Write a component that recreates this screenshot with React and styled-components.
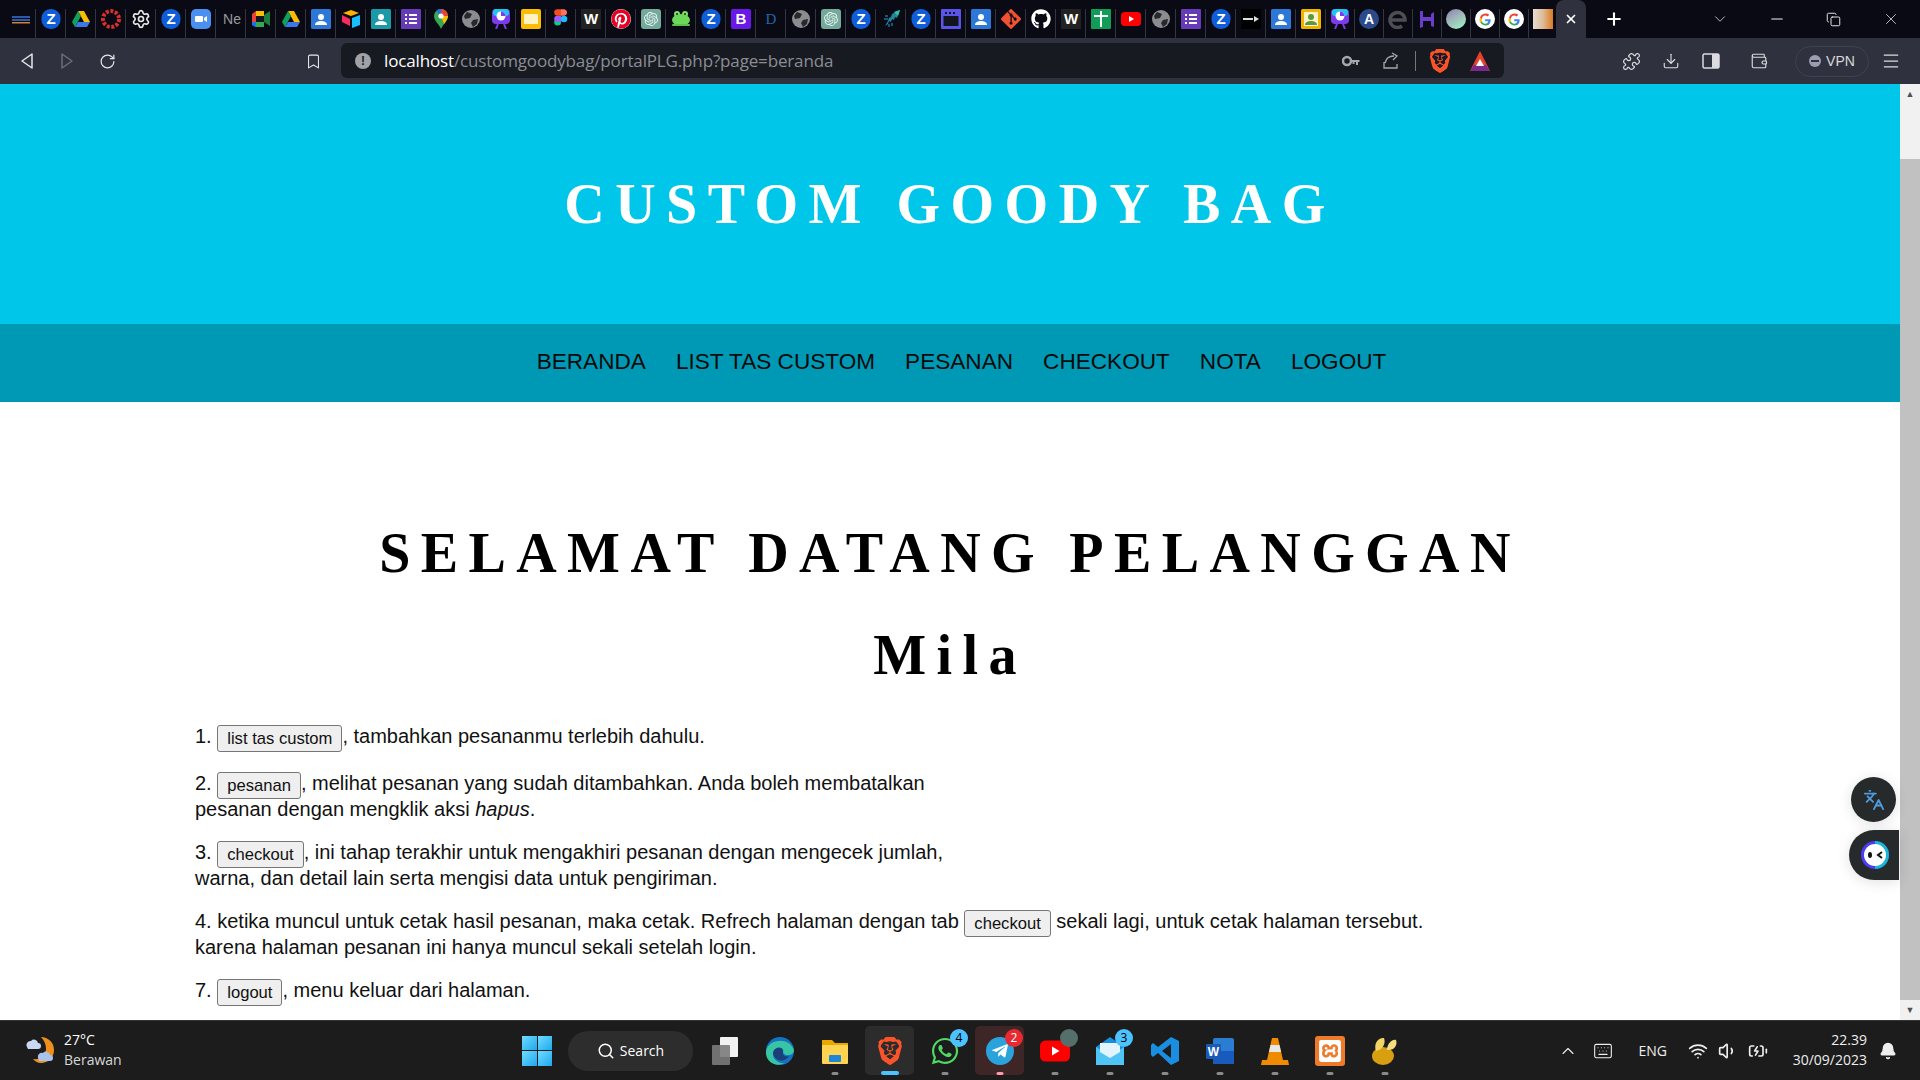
import styled, { createGlobalStyle } from "styled-components";
import {
  Bookmark, ChevronDown, ChevronUp, Copy, Download, Menu, Minus, Plus, Puzzle, RotateCw, Search,
  Wallet, X, Wifi, Volume1, BatteryCharging, Keyboard, Bell, Languages, Settings,
} from "lucide-react";
import { FaGithub, FaPinterest, FaWhatsapp, FaTelegramPlane } from "react-icons/fa";
import { SiBrave, SiOpenai, SiXampp, SiGit } from "react-icons/si";

const GlobalStyle = createGlobalStyle`
  html, body { margin: 0; padding: 0; height: 100%; overflow: hidden; }
  body { font-family: "Liberation Sans", Arial, sans-serif; background: #fff; }
`;

const Screen = styled.div`
  width: 1920px;
  height: 1080px;
  display: flex;
  flex-direction: column;
  position: relative;
  overflow: hidden;
`;

/* ---------- browser chrome ---------- */
const TabStrip = styled.div`
  height: 38px;
  flex: none;
  background: #0a0a14;
  display: flex;
  align-items: stretch;
  padding-left: 6px;
  color: #fff;
`;
const Tab = styled.div`
  width: ${(p) => p.$w || 30}px;
  flex: none;
  display: flex;
  align-items: center;
  justify-content: center;
  border-right: 1px solid #33353f;
  margin: 9px 0 0;
  padding-bottom: 9px;
  box-sizing: border-box;
  svg { display: block; }
`;
const ActiveTab = styled.div`
  width: 30px;
  flex: none;
  margin-left: -2px;
  background: #2f323e;
  border-radius: 8px 8px 0 0;
  display: flex;
  align-items: center;
  justify-content: center;
  color: #fff;
`;
const NewTab = styled.div`
  margin-left: 13px;
  width: 30px;
  display: flex;
  align-items: center;
  justify-content: center;
`;
const WindowControls = styled.div`
  margin-left: auto;
  display: flex;
  align-items: center;
  color: #f0f0f2;
`;
const WindowButton = styled.div`
  width: ${(p) => p.$w || 57}px;
  display: flex;
  justify-content: center;
`;
const Toolbar = styled.div`
  height: 46px;
  flex: none;
  background: #2f323e;
  display: flex;
  align-items: center;
  color: #e6e6ea;
  box-sizing: border-box;
`;
const NavIcon = styled.div`
  width: 40px;
  display: flex;
  justify-content: center;
  color: ${(p) => (p.$dim ? "#6b6e78" : "#e6e6ea")};
`;
const NavIcons = styled.div`
  display: flex;
  padding-left: 7px;
  width: 341px;
  flex: none;
  box-sizing: border-box;
  align-items: center;
`;
const BookmarkSlot = styled.div`
  margin-left: auto;
  width: 30px;
  margin-right: 13px;
  display: flex;
  justify-content: center;
`;
const AddressBar = styled.div`
  width: 1163px;
  height: 35px;
  margin-top: -1px;
  background: #181a21;
  border-radius: 6px;
  display: flex;
  align-items: center;
  padding: 0 4px 0 14px;
  box-sizing: border-box;
`;
const InfoDot = styled.div`
  width: 16px;
  height: 16px;
  border-radius: 50%;
  background: #a0a2a8;
  color: #181a21;
  font-size: 12px;
  font-weight: 700;
  text-align: center;
  line-height: 16px;
`;
const Url = styled.div`
  margin-left: 13px;
  font-family: "Open Sans", sans-serif;
  font-size: 17px;
  letter-spacing: -0.15px;
  color: #8b8d94;
  flex: 1;
  white-space: nowrap;
  b { font-weight: 400; color: #fff; }
`;
const BarIcon = styled.div`
  display: flex;
  align-items: center;
  justify-content: center;
  width: 40px;
  color: #a6a8ae;
`;
const BarDivider = styled.div`
  width: 1px;
  height: 20px;
  background: #777;
  margin: 0 4px;
`;
const ToolGroup = styled.div`
  flex: 1;
  display: flex;
  align-items: center;
  padding-left: 107px;
`;
const ToolIcon = styled.div`
  width: 40px;
  margin-left: ${(p) => p.$ml || 0}px;
  margin-right: ${(p) => p.$mr || 0}px;
  display: flex;
  justify-content: center;
  color: #dcdce0;
`;
const VpnPill = styled.div`
  width: 74px;
  height: 31px;
  border: 1px solid #3e414e;
  border-radius: 16px;
  box-sizing: border-box;
  margin-left: 8px;
  display: flex;
  align-items: center;
  justify-content: center;
  gap: 5px;
  font-size: 14px;
  color: #d8d8dc;
`;
const VpnDot = styled.span`
  width: 12px;
  height: 12px;
  border-radius: 50%;
  background: #9a9eb0;
  display: flex;
  align-items: center;
  justify-content: center;
  &::after { content: ""; width: 8px; height: 2px; background: #2f323e; }
`;

/* ---------- page ---------- */
const Viewport = styled.div`
  flex: 1;
  min-height: 0;
  display: flex;
`;
const Page = styled.main`
  flex: 1;
  min-width: 0;
  overflow: hidden;
  background: #fff;
`;
const Hero = styled.header`
  height: 240px;
  background: #00c6e9;
  display: flex;
  align-items: center;
  justify-content: center;
`;
const SiteTitle = styled.div`
  font-family: "Liberation Serif", "Times New Roman", serif;
  font-weight: 700;
  font-size: 56px;
  letter-spacing: 10.5px;
  color: #fff;
  white-space: nowrap;
`;
const NavBar = styled.nav`
  height: 78px;
  background: #0099b5;
  display: flex;
  align-items: center;
  justify-content: center;
  gap: 30px;
  padding: 0 0 2px 23px;
  box-sizing: border-box;
`;
const NavLink = styled.a`
  font-size: 22.6px;
  color: #0a0a0a;
`;
const Content = styled.section`
  padding: 119px 195px 0;
`;
const Heading = styled.h1`
  margin: 0;
  text-align: center;
  font-family: "Liberation Serif", "Times New Roman", serif;
  font-weight: 700;
  font-size: 56px;
  line-height: 64px;
  letter-spacing: 10.4px;
  color: #000;
  white-space: nowrap;
  & + & { margin-top: 38px; }
`;
const Steps = styled.div`
  margin-top: 36px;
  font-size: 20px;
  line-height: 26px;
  color: #111;
`;
const Step = styled.p`
  margin: 0 0 17px;
  &:first-child { margin-bottom: 21px; }
`;
const InlineButton = styled.button`
  font-family: "Liberation Sans", Arial, sans-serif;
  font-size: 16.6px;
  height: 27px;
  padding: 0 9px;
  margin: 0 0 -3px;
  background: #efefef;
  border: 1px solid #767676;
  border-radius: 3px;
  color: #111;
  vertical-align: -1px;
  line-height: 25px;
`;
const Scrollbar = styled.div`
  width: 20px;
  flex: none;
  background: #f1f1f1;
  display: flex;
  flex-direction: column;
  align-items: center;
`;
const ScrollArrow = styled.div`
  height: 20px;
  color: #505050;
  font-size: 9px;
  line-height: 20px;
`;
const ScrollTrack = styled.div`
  flex: 1;
  width: 100%;
  padding-top: 55px;
  box-sizing: border-box;
  display: flex;
`;
const ScrollThumb = styled.div`
  width: 100%;
  background: #c1c1c1;
`;
const FloatingTranslate = styled.div`
  position: absolute;
  left: 1851px;
  top: 777px;
  width: 45px;
  height: 45px;
  border-radius: 50%;
  background: #262a2b;
  display: flex;
  align-items: center;
  justify-content: center;
  color: #4f9be0;
  box-shadow: 0 2px 14px rgba(0, 0, 0, 0.12);
`;
const FloatingBot = styled.div`
  position: absolute;
  left: 1849px;
  top: 830px;
  width: 50px;
  height: 50px;
  border-radius: 25px 0 0 25px;
  background: #262a2b;
  display: flex;
  align-items: center;
  padding-left: 11px;
  box-sizing: border-box;
  box-shadow: 0 2px 14px rgba(0, 0, 0, 0.12);
`;

/* ---------- taskbar ---------- */
const Taskbar = styled.footer`
  height: 60px;
  flex: none;
  background: #1c1c1c;
  border-top: 1px solid #333;
  box-sizing: border-box;
  display: flex;
  align-items: center;
  color: #fff;
`;
const Weather = styled.div`
  width: 522px;
  flex: none;
  display: flex;
  align-items: center;
  padding: 0 0 2px 24px;
  gap: 8px;
  box-sizing: border-box;
  font-family: "Open Sans", sans-serif;
  font-size: 14px;
  line-height: 20px;
  span { color: #d8d8d8; display: block; }
`;
const StartButton = styled.div`
  width: 30px;
  height: 30px;
  display: grid;
  grid-template-columns: 1fr 1fr;
  gap: 1px;
`;
const StartPane = styled.div`
  background: linear-gradient(135deg, #6fdcff, #1fa8ee);
`;
const SearchPill = styled.div`
  margin-left: 16px;
  margin-right: 4px;
  width: 125px;
  height: 40px;
  border-radius: 20px;
  background: #2d2d2d;
  display: flex;
  align-items: center;
  justify-content: center;
  gap: 5px;
  font-family: "Open Sans", sans-serif;
  font-size: 14px;
`;
const AppSlot = styled.div`
  width: 49px;
  height: 49px;
  margin: 0 3px;
  flex: none;
  position: relative;
  border-radius: 5px;
  background: ${(p) => p.$bg || "transparent"};
  display: flex;
  align-items: center;
  justify-content: center;
`;
const RunDot = styled.span`
  position: absolute;
  bottom: 0px;
  left: 50%;
  transform: translateX(-50%);
  width: ${(p) => (p.$wide ? 18 : 7)}px;
  height: ${(p) => (p.$wide ? 4 : 3)}px;
  border-radius: 2px;
  background: ${(p) => p.$color || "#8a8a8a"};
`;
const Badge = styled.span`
  position: absolute;
  top: 3px;
  right: 1px;
  width: 18px;
  height: 18px;
  border-radius: 50%;
  background: ${(p) => p.$bg};
  color: ${(p) => p.$fg || "#000"};
  font-size: 12px;
  line-height: 18px;
  text-align: center;
  font-family: "Open Sans", sans-serif;
`;
const Tray = styled.div`
  margin-left: auto;
  margin-right: 19px;
  display: flex;
  align-items: center;
  color: #eee;
  font-family: "Open Sans", sans-serif;
`;
const TrayItem = styled.div`
  width: ${(p) => p.$w || 30}px;
  display: flex;
  justify-content: center;
  font-size: 14px;
`;
const Clock = styled.div`
  text-align: right;
  font-size: 14px;
  line-height: 20px;
  margin: 0 8px 2px 20px;
`;
const PinterestBadge = styled(FaPinterest)`
  background: #fff;
  border-radius: 50%;
`;

/* ---------- tab favicons ---------- */
const Txt = ({ x = 10, y = 15, size = 14, fill = "#fff", weight = 700, font = "Liberation Sans", children }) => (
  <text x={x} y={y} fontSize={size} fill={fill} fontWeight={weight} fontFamily={font} textAnchor="middle">{children}</text>
);
const Ico = ({ children, s = 20 }) => <svg width={s} height={s} viewBox="0 0 20 20">{children}</svg>;

const ZaloIcon = () => (
  <Ico><rect x="0.5" y="0" width="19" height="20" rx="9" fill="#0f5ed8" /><Txt size={15}>Z</Txt></Ico>
);
const DriveIcon = ({ s = 20 }) => (
  <Ico s={s}>
    <path d="M7 2h6l6 11h-6z" fill="#fbbc04" />
    <path d="M7 2L1 13l3 5 6-11z" fill="#0fa15c" />
    <path d="M4 18h12l3-5H7z" fill="#3b78e7" />
  </Ico>
);
const MeetIcon = () => (
  <Ico>
    <path d="M1 5l4-3h8v5H5v6H1z" fill="#ea4335" />
    <path d="M1 13h4v5H4l-3-2z" fill="#1a73e8" />
    <path d="M5 2h8v5H5z" fill="#fbbc04" />
    <path d="M5 13h8v5H5z" fill="#34a853" />
    <path d="M13 6l6-4v15l-6-4z" fill="#188038" />
    <rect x="5" y="7" width="8" height="6" fill="#12151e" />
  </Ico>
);
const ContactIcon = ({ bg, fg = "#fff", frame }) => (
  <Ico>
    <rect x="0" y="0" width="20" height="20" rx="1.5" fill={bg} />
    {frame && <rect x="3" y="3" width="14" height="14" fill={frame} />}
    <circle cx="10" cy="8" r="3" fill={fg} />
    <path d="M4 16c0-3 3-4 6-4s6 1 6 4z" fill={fg} />
  </Ico>
);
const AirtableIcon = () => (
  <Ico>
    <path d="M10 1l8 3-8 3-8-3z" fill="#fcb400" />
    <path d="M11 9l8-3v10l-8 3z" fill="#18bfff" />
    <path d="M1 6l8 4v7L1 13z" fill="#f82b60" />
  </Ico>
);
const FormsIcon = () => (
  <Ico>
    <rect width="20" height="20" rx="1" fill="#673ab7" />
    <rect x="4" y="5" width="2" height="2" fill="#fff" /><rect x="8" y="5" width="8" height="2" fill="#fff" />
    <rect x="4" y="9" width="2" height="2" fill="#fff" /><rect x="8" y="9" width="8" height="2" fill="#fff" />
    <rect x="4" y="13" width="2" height="2" fill="#fff" /><rect x="8" y="13" width="8" height="2" fill="#fff" />
  </Ico>
);
const MapsIcon = () => (
  <Ico>
    <path d="M10 0a7 7 0 0 1 7 7c0 5-5 8-7 13-2-5-7-8-7-13a7 7 0 0 1 7-7z" fill="#34a853" />
    <path d="M5 2a7 7 0 0 1 5-2v7z" fill="#1a73e8" />
    <path d="M10 0a7 7 0 0 1 7 7h-7z" fill="#ea4335" />
    <path d="M17 7c0 3-2 5-4 8l-3-8z" fill="#fbbc04" />
    <circle cx="10" cy="7" r="2.6" fill="#fff" />
  </Ico>
);
const GlobeIcon = () => (
  <Ico>
    <circle cx="10" cy="10" r="9" fill="#8a8c90" />
    <path d="M6 3l5 2-2 4-5 1-1-3zM12 11l5-1-1 5-4 3-2-4z" fill="#26282c" />
  </Ico>
);
const PieIcon = () => (
  <Ico>
    <rect x="1" y="0" width="18" height="15" rx="4" fill="#7c3aed" />
    <rect x="2" y="0" width="16" height="7" rx="3" fill="#22c3ee" />
    <circle cx="10" cy="7" r="4.5" fill="#fff" />
    <path d="M10 7V2.500a4.500 4.500 0 0 1 4.500 4.500z" fill="#7c3aed" />
    <path d="M7 15l-2 5M13 15l2 5" stroke="#7c3aed" strokeWidth="2" />
  </Ico>
);
const SlidesIcon = () => (
  <Ico>
    <rect width="20" height="20" rx="2" fill="#fbbc04" />
    <rect x="3" y="5" width="14" height="10" fill="#fff3c4" />
  </Ico>
);
const FigmaIcon = () => (
  <Ico>
    <circle cx="13" cy="10" r="3.300" fill="#1abcfe" />
    <path d="M6.500 16.600a3.300 3.300 0 0 1 0-6.600H10v3.300a3.300 3.300 0 0 1-3.500 3.300z" fill="#0acf83" />
    <path d="M3.200 10a3.300 3.300 0 0 1 3.300-3.300H10V13H6.500A3.300 3.300 0 0 1 3.200 10z" fill="#a259ff" />
    <path d="M3.200 3.500A3.300 3.300 0 0 1 6.500.200H10v6.500H6.500a3.300 3.300 0 0 1-3.300-3.200z" fill="#f24e1e" />
    <path d="M10 .200h3.200a3.300 3.300 0 0 1 0 6.500H10z" fill="#ff7262" />
  </Ico>
);
const WikiIcon = () => (
  <Ico><rect width="20" height="20" fill="#222" /><Txt size={15}>W</Txt></Ico>
);
const GptIcon = () => (
  <svg width="20" height="20" viewBox="0 0 20 20">
    <rect width="20" height="20" rx="3" fill="#74aa9c" />
    <SiOpenai x="3" y="3" size={14} color="#e8f3f0" />
  </svg>
);
const FrogIcon = () => (
  <Ico>
    <circle cx="6" cy="5" r="3" fill="#7fe06a" /><circle cx="14" cy="5" r="3" fill="#7fe06a" />
    <ellipse cx="10" cy="11" rx="9" ry="6" fill="#6cd85a" />
    <circle cx="6" cy="5" r="1" fill="#1a3010" /><circle cx="14" cy="5" r="1" fill="#1a3010" />
    <rect x="1" y="15" width="18" height="2" rx="1" fill="#5cc04a" />
  </Ico>
);
const LetterTile = ({ bg, letter, color = "#fff", font = "Liberation Sans", weight = 700 }) => (
  <Ico><rect width="20" height="20" rx="2" fill={bg} /><Txt size={15} fill={color} font={font} weight={weight}>{letter}</Txt></Ico>
);
const RocketIcon = () => (
  <Ico>
    <path d="M19 1l-3 8-2-1-1 3-2-1-1 3-2-1-1 3-3 2 3-5 1-3 2-1 1-3 2-1 1-1z" fill="#1c8a9a" />
    <path d="M19 1l-6 2 4 4z" fill="#2ec4a8" />
    <path d="M4 7h3M3 10h4M8 15v3M11 14v3" stroke="#1f6f9a" strokeWidth="1.500" />
  </Ico>
);
const WindowIcon = () => (
  <Ico>
    <rect width="20" height="20" rx="1" fill="#5b54e8" />
    <rect x="2.500" y="7" width="15" height="10" fill="#12151e" />
    <rect x="4" y="3" width="2" height="2" fill="#12151e" /><rect x="8" y="3" width="2" height="2" fill="#12151e" /><rect x="12" y="3" width="2" height="2" fill="#12151e" />
  </Ico>
);
const CrossTile = () => (
  <Ico><rect width="20" height="20" rx="1" fill="#0f9d58" /><path d="M10 2v16M3 7h14" stroke="#fff" strokeWidth="2" /></Ico>
);
const YoutubeIcon = ({ s = 20 }) => (
  <Ico s={s}><rect x="0" y="3" width="20" height="14" rx="3.500" fill="#f00" /><path d="M8 7l5 3-5 3z" fill="#fff" /></Ico>
);
const ArrowTile = () => (
  <Ico><rect width="20" height="20" fill="#000" /><path d="M2 10h10" stroke="#ddd" strokeWidth="2" /><path d="M13 7l5 3-5 3z" fill="#ddd" /></Ico>
);
const SphereIcon = () => (
  <svg width="20" height="20" viewBox="0 0 20 20">
    <defs><linearGradient id="sph" x1="0" y1="0" x2="0.6" y2="1"><stop offset="0" stopColor="#8d7ab0" /><stop offset="0.5" stopColor="#9fb4b8" /><stop offset="1" stopColor="#9de8c0" /></linearGradient></defs>
    <ellipse cx="10" cy="10" rx="10" ry="10" fill="url(#sph)" />
  </svg>
);
const GoogleIcon = () => (
  <Ico>
    <circle cx="10" cy="10" r="10" fill="#fff" />
    <path d="M15.500 10.200h-5.300v2.100h3a3.300 3.300 0 0 1-1.300 2l1.800 1.400a5.700 5.700 0 0 0 1.800-5.500z" fill="#4285f4" />
    <path d="M10.200 16.500a5.900 5.900 0 0 0 3.800-1l-1.800-1.400a3.500 3.500 0 0 1-5.300-1.800H5a6.200 6.200 0 0 0 5.200 4.200z" fill="#34a853" />
    <path d="M6.900 12.300a3.600 3.600 0 0 1 0-2.400l-1.900-1.500a6.300 6.300 0 0 0 0 5.400z" fill="#fbbc04" />
    <path d="M10.200 6.500c1 0 1.800.3 2.400.9l1.700-1.600a5.900 5.900 0 0 0-9.300 2.600l1.900 1.500a3.500 3.500 0 0 1 3.300-3.400z" fill="#ea4335" />
  </Ico>
);
const SwatchIcon = () => (
  <svg width="20" height="20" viewBox="0 0 20 20">
    <defs><linearGradient id="swt"><stop offset="0" stopColor="#e6dcd2" /><stop offset="0.5" stopColor="#ddbb98" /><stop offset="1" stopColor="#dc7a20" /></linearGradient></defs>
    <rect width="20" height="20" fill="url(#swt)" />
  </svg>
);
// the "e" mark of the tab next to the Hostinger one
const RingEIcon = () => (
  <Ico><path d="M3 11h14a7.500 7.500 0 1 0-3 6" fill="none" stroke="#4c4e54" strokeWidth="3.500" /></Ico>
);

const favicons = [
  <Ico><rect x="1" y="7" width="18" height="2" fill="#2a5aa8" /><rect x="1" y="10" width="18" height="2" fill="#2a5aa8" /><rect x="1" y="13" width="18" height="1.500" fill="#d08030" /></Ico>,
  <ZaloIcon />, <DriveIcon />,
  <Ico><circle cx="10" cy="10" r="8" fill="none" stroke="#d8302a" strokeWidth="4" strokeDasharray="3 1.600" /></Ico>,
  <Settings size={20} color="#e8e8e8" />,
  <ZaloIcon />,
  <Ico><rect width="20" height="20" rx="5" fill="#4a90f0" /><rect x="4" y="7" width="8" height="6" rx="1" fill="#fff" /><path d="M13 9l3-2v6l-3-2z" fill="#fff" /></Ico>,
  <Ico><Txt x={11} size={14} fill="#9a9a9a" weight={400}>Ne</Txt></Ico>,
  <MeetIcon />, <DriveIcon />, <ContactIcon bg="#2b78d8" />, <AirtableIcon />, <ContactIcon bg="#1a9aa6" />, <FormsIcon />,
  <MapsIcon />, <GlobeIcon />, <PieIcon />, <SlidesIcon />, <FigmaIcon />, <WikiIcon />,
  <PinterestBadge size={20} color="#e60023" />,
  <GptIcon />, <FrogIcon />, <ZaloIcon />, <LetterTile bg="#6a18e8" letter="B" />,
  <LetterTile bg="transparent" letter="D" color="#2464b0" font="Liberation Serif" weight={400} />,
  <GlobeIcon />, <GptIcon />, <ZaloIcon />, <RocketIcon />, <ZaloIcon />, <WindowIcon />, <ContactIcon bg="#2b78d8" />,
  <SiGit size={20} color="#f05133" />, <FaGithub size={20} color="#fff" />, <WikiIcon />, <CrossTile />, <YoutubeIcon />,
  <GlobeIcon />, <FormsIcon />, <ZaloIcon />, <ArrowTile />, <ContactIcon bg="#2b78d8" />,
  <ContactIcon bg="#f0b400" fg="#5a9a3c" frame="#fff2c8" />, <PieIcon />,
  <Ico><circle cx="10" cy="10" r="10" fill="#2a4a8a" /><Txt size={14}>A</Txt></Ico>,
  <RingEIcon />,
  <Ico><path d="M3 2h3v6h8V5l3-2v15l-3-1v-5H6v6l-3 1z" fill="#6a3ec8" /></Ico>,
  <SphereIcon />, <GoogleIcon />, <GoogleIcon />, <SwatchIcon />,
];

/* ---------- taskbar app icons ---------- */
const TaskIcon = ({ children }) => <svg width="30" height="30" viewBox="0 0 30 30">{children}</svg>;
const apps = [
  { icon: <TaskIcon><rect x="10" y="1" width="18" height="20" rx="1" fill="#f2f2f2" /><rect x="2" y="9" width="18" height="20" rx="1" fill="#7b7b7b" opacity="0.9" /></TaskIcon> },
  { icon: <TaskIcon><circle cx="15" cy="15" r="14" fill="#1670c4" /><path d="M1 15C3 3 24 0 29 14c0 6-10 7-11 2 2-5-8-7-10 1-1 6 6 11 12 10C10 32 0 25 1 15z" fill="#36c6a4" /><path d="M8 17c1-6 9-7 10-2-1 5 3 6 6 5-3 6-14 7-16-3z" fill="#1c3f7a" /></TaskIcon> },
  { dot: true, icon: <TaskIcon><path d="M2 4h10l3 3h13v20H2z" fill="#e8a800" /><rect x="2" y="9" width="26" height="19" rx="1" fill="#ffd452" /><rect x="9" y="19" width="12" height="7" rx="1" fill="#1c86d8" /></TaskIcon> },
  { bg: "#2c2c2c", dot: "#4cc2ff", wide: true, icon: <SiBrave size={28} color="#fb542b" /> },
  { dot: true, badge: "4", badgeBg: "#4cc2ff", icon: <FaWhatsapp size={30} color="#4ed964" /> },
  { bg: "#3f2626", dot: "#ff9aa8", badge: "2", badgeBg: "#e82a30", badgeFg: "#fff", icon: <TaskIcon><circle cx="15" cy="15" r="14" fill="#2aa3dc" /><FaTelegramPlane x="6" y="6" size={18} color="#fff" /></TaskIcon> },
  { dot: true, badge: " ", badgeBg: "#556f6a", icon: <YoutubeIcon s={30} /> },
  { dot: true, badge: "3", badgeBg: "#4cc2ff", icon: <TaskIcon><path d="M1 11L15 1l14 10v18H1z" fill="#1490df" /><path d="M1 11l14 9 14-9v18H1z" fill="#50c4f5" /><path d="M5 7h20v9l-10 6-10-6z" fill="#e4f4fc" /></TaskIcon> },
  { dot: true, icon: <TaskIcon><path d="M21 1l8 4v20l-8 4-13-12-5 4-2-2v-10l2-2 5 4z" fill="#1a8ee0" /><path d="M21 8L12 15l9 7z" fill="#1c1c1c" /></TaskIcon> },
  { dot: true, icon: <TaskIcon><rect x="8" y="2" width="21" height="26" rx="2" fill="#2b7cd3" /><rect x="8" y="15" width="21" height="13" fill="#185abd" /><rect x="1" y="8" width="15" height="15" rx="1" fill="#1a5bb8" /><Txt x={8.500} y={20} size={12}>W</Txt></TaskIcon> },
  { dot: true, icon: <TaskIcon><path d="M12 2h6l5 22H7z" fill="#f08a00" /><path d="M10.500 9h9l1.500 7H9z" fill="#e8e8e8" /><path d="M2 24h26l1 5H1z" fill="#f08a00" /></TaskIcon> },
  { dot: true, icon: <TaskIcon><rect x="0" y="0" width="30" height="30" rx="3" fill="#ef7a2b" /><SiXampp x="4" y="4" size={22} color="#fff" /></TaskIcon> },
  { dot: true, icon: <TaskIcon><ellipse cx="13" cy="20" rx="11" ry="9" fill="#d8a010" /><path d="M6 15C3 7 9 1 14 2c2 5-1 12-8 13z" fill="#f2d464" /><path d="M17 14c0-6 5-11 9-10 2 5-2 11-9 10z" fill="#f5dd80" /></TaskIcon> },
];

const WeatherIcon = () => (
  <svg width="32" height="32" viewBox="0 0 32 32">
    <path d="M17 3a13 13 0 0 1 0 26c-4 0-6-2-8-4 8 1 13-4 13-10 0-5-2-9-5-12z" fill="#f0901c" />
    <path d="M3 13a4 4 0 0 1 4-6 4 4 0 0 1 7 2 3 3 0 0 1 0 6H4z" fill="#c8d8f0" />
    <path d="M14 24a4 4 0 0 1 5-5 4 4 0 0 1 7 2 3 3 0 0 1 0 6H15z" fill="#a8c4ec" />
  </svg>
);

export default function App() {
  return (
    <Screen>
      <GlobalStyle />
      <TabStrip>
        {favicons.map((icon, i) => (
          <Tab key={i} $w={i >= 44 ? 29 : 30}>{icon}</Tab>
        ))}
        <ActiveTab><X size={14} strokeWidth={3} /></ActiveTab>
        <NewTab><Plus size={20} strokeWidth={2.5} /></NewTab>
        <WindowControls>
          <WindowButton><ChevronDown size={18} strokeWidth={1} /></WindowButton>
          <WindowButton><Minus size={18} strokeWidth={1.5} /></WindowButton>
          <WindowButton><Copy size={15} strokeWidth={1.5} /></WindowButton>
          <WindowButton $w={58}><X size={18} strokeWidth={1} /></WindowButton>
        </WindowControls>
      </TabStrip>

      <Toolbar>
        <NavIcons>
          <NavIcon><svg width="16" height="18" viewBox="0 0 16 18"><path d="M13 2L3 9l10 7z" fill="none" stroke="currentColor" strokeWidth="1.500" strokeLinejoin="round" /></svg></NavIcon>
          <NavIcon $dim><svg width="16" height="18" viewBox="0 0 16 18"><path d="M3 2l10 7-10 7z" fill="none" stroke="currentColor" strokeWidth="1.500" strokeLinejoin="round" /></svg></NavIcon>
          <NavIcon><RotateCw size={17} strokeWidth={1.7} /></NavIcon>
          <BookmarkSlot><Bookmark size={17} strokeWidth={1.5} /></BookmarkSlot>
        </NavIcons>
        <AddressBar>
          <InfoDot>!</InfoDot>
          <Url><b>localhost</b>/customgoodybag/portalPLG.php?page=beranda</Url>
          <BarIcon>
            <svg width="18" height="12" viewBox="0 0 18 12"><circle cx="5" cy="6" r="4" fill="none" stroke="currentColor" strokeWidth="2.500" /><path d="M8 5h9.500v2H16v3h-2V7h-1.500v2h-2V7H8z" fill="currentColor" /></svg>
          </BarIcon>
          <BarIcon>
            <svg width="18" height="18" viewBox="0 0 18 18"><path d="M2 10v6h13v-4M3 11c1-5 5-7 9-7M10 1l5 3-4 4" fill="none" stroke="currentColor" strokeWidth="1.300" /></svg>
          </BarIcon>
          <BarDivider />
          <BarIcon><SiBrave size={24} color="#fb542b" /></BarIcon>
          <BarIcon>
            <svg width="22" height="22" viewBox="0 0 22 22"><path d="M11 1l10 20H1z" fill="#e8432a" /><path d="M1 21l4-6h12l4 6z" fill="#7a2a8a" /><path d="M11 9l4 7H7z" fill="#fff" /></svg>
          </BarIcon>
        </AddressBar>
        <ToolGroup>
          <ToolIcon><Puzzle size={19} strokeWidth={1.5} /></ToolIcon>
          <ToolIcon><Download size={18} strokeWidth={1.5} /></ToolIcon>
          <ToolIcon>
            <svg width="18" height="16" viewBox="0 0 18 16"><rect x="1" y="1" width="16" height="14" rx="1.500" fill="none" stroke="currentColor" strokeWidth="1.500" /><rect x="10" y="1" width="7" height="14" fill="currentColor" /></svg>
          </ToolIcon>
          <ToolIcon $ml={8} $mr={8}><Wallet size={18} strokeWidth={1.5} /></ToolIcon>
          <VpnPill><VpnDot />VPN</VpnPill>
          <ToolIcon $ml={2}><Menu size={20} strokeWidth={1.5} /></ToolIcon>
        </ToolGroup>
      </Toolbar>

      <Viewport>
        <Page>
          <Hero><SiteTitle>CUSTOM GOODY BAG</SiteTitle></Hero>
          <NavBar>
            {["BERANDA", "LIST TAS CUSTOM", "PESANAN", "CHECKOUT", "NOTA", "LOGOUT"].map((l) => (
              <NavLink key={l}>{l}</NavLink>
            ))}
          </NavBar>
          <Content>
            <Heading>SELAMAT DATANG PELANGGAN</Heading>
            <Heading>Mila</Heading>
            <Steps>
              <Step>1. <InlineButton>list tas custom</InlineButton>, tambahkan pesananmu terlebih dahulu.</Step>
              <Step>
                2. <InlineButton>pesanan</InlineButton>, melihat pesanan yang sudah ditambahkan. Anda boleh membatalkan<br />
                pesanan dengan mengklik aksi <em>hapus</em>.
              </Step>
              <Step>
                3. <InlineButton>checkout</InlineButton>, ini tahap terakhir untuk mengakhiri pesanan dengan mengecek jumlah,<br />
                warna, dan detail lain serta mengisi data untuk pengiriman.
              </Step>
              <Step>
                4. ketika muncul untuk cetak hasil pesanan, maka cetak. Refrech halaman dengan tab <InlineButton>checkout</InlineButton> sekali lagi, untuk cetak halaman tersebut.<br />
                karena halaman pesanan ini hanya muncul sekali setelah login.
              </Step>
              <Step>7. <InlineButton>logout</InlineButton>, menu keluar dari halaman.</Step>
            </Steps>
          </Content>
        </Page>
        <Scrollbar>
          <ScrollArrow>▲</ScrollArrow>
          <ScrollTrack><ScrollThumb /></ScrollTrack>
          <ScrollArrow>▼</ScrollArrow>
        </Scrollbar>
      </Viewport>

      <FloatingTranslate><Languages size={22} /></FloatingTranslate>
      <FloatingBot>
        <svg width="30" height="30" viewBox="0 0 30 30">
          <circle cx="15" cy="15" r="14" fill="#4a3cf0" />
          <path d="M15 1a14 14 0 0 1 0 28z" fill="#19b5d8" />
          <circle cx="15" cy="15" r="11" fill="#fff" />
          <ellipse cx="10" cy="15" rx="2" ry="3" fill="#111" />
          <path d="M22 12l-4 3 4 3" fill="none" stroke="#111" strokeWidth="2" />
        </svg>
      </FloatingBot>

      <Taskbar>
        <Weather>
          <WeatherIcon />
          <div>27°C<span>Berawan</span></div>
        </Weather>
        <StartButton><StartPane /><StartPane /><StartPane /><StartPane /></StartButton>
        <SearchPill><Search size={18} />Search</SearchPill>
        {apps.map((a, i) => (
          <AppSlot key={i} $bg={a.bg}>
            {a.icon}
            {a.badge && <Badge $bg={a.badgeBg} $fg={a.badgeFg}>{a.badge}</Badge>}
            {a.dot && <RunDot $wide={a.wide} $color={typeof a.dot === "string" ? a.dot : undefined} />}
          </AppSlot>
        ))}
        <Tray>
          <TrayItem><ChevronUp size={20} strokeWidth={1.3} /></TrayItem>
          <TrayItem $w={40}><Keyboard size={20} strokeWidth={1.3} /></TrayItem>
          <TrayItem $w={60}>ENG</TrayItem>
          <TrayItem><Wifi size={20} /></TrayItem>
          <TrayItem><Volume1 size={20} /></TrayItem>
          <TrayItem><BatteryCharging size={20} /></TrayItem>
          <Clock>22.39<br />30/09/2023</Clock>
          <TrayItem $w={26}><Bell size={18} fill="#eee" /></TrayItem>
        </Tray>
      </Taskbar>
    </Screen>
  );
}
